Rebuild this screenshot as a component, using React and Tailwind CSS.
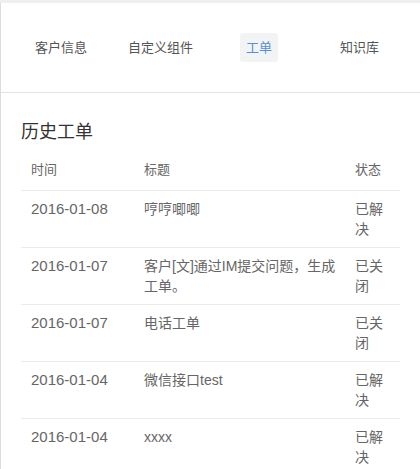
const tabs = [
  { label: '客户信息', ml: 'ml-[28px]' },
  { label: '自定义组件', ml: 'ml-[29px]' },
  { label: '工单', ml: 'ml-[41px]', active: true },
  { label: '知识库', ml: 'ml-[56px]' },
]

const orders = [
  { date: '2016-01-08', title: '哼哼唧唧', status: '已解决' },
  { date: '2016-01-07', title: '客户[文]通过IM提交问题，生成工单。', status: '已关闭' },
  { date: '2016-01-07', title: '电话工单', status: '已关闭' },
  { date: '2016-01-04', title: '微信接口test', status: '已解决' },
  { date: '2016-01-04', title: 'xxxx', status: '已解决' },
]

export default function App() {
  return (
    <div
      className="min-h-screen w-full bg-[#efefef] pt-[3px]"
      style={{ fontFamily: '"Liberation Sans", "Noto Sans CJK SC", sans-serif' }}
    >
      <div className="min-h-[466px] bg-white border-l border-[#dcdcdc] overflow-hidden">
        {/* Tabs */}
        <nav className="h-[90px] flex items-center border-b border-[#e3e3e3]">
          {tabs.map(tab => (
            <span
              key={tab.label}
              className={
                tab.ml +
                ' px-[6px] py-[6px] rounded-[3px] text-[13px] leading-[17px] whitespace-nowrap ' +
                (tab.active ? 'bg-[#f2f3f5] text-[#5a8fd0]' : 'text-[#555]')
              }
            >
              {tab.label}
            </span>
          ))}
        </nav>

        {/* History */}
        <section className="ml-[20px]">
          <h2 className="mt-[26px] text-[18px] leading-[26px] text-[#333]">历史工单</h2>
          <table className="w-[379px] table-fixed border-collapse">
            <colgroup>
              <col className="w-[113px]" />
              <col className="w-[211px]" />
              <col className="w-[55px]" />
            </colgroup>
            <thead>
              <tr className="border-b border-[#ebebeb]">
                <th className="pl-[10px] pt-[15px] pb-[10px] text-left font-normal text-[13px] leading-[20px] text-[#666]">时间</th>
                <th className="pl-[10px] pt-[15px] pb-[10px] text-left font-normal text-[13px] leading-[20px] text-[#666]">标题</th>
                <th className="px-[10px] pt-[15px] pb-[10px] text-left font-normal text-[13px] leading-[20px] text-[#666]">状态</th>
              </tr>
            </thead>
            <tbody>
              {orders.map((o, i) => (
                <tr key={i} className="border-b border-[#ebebeb]">
                  <td className="pl-[10px] py-[8px] align-top text-[15px] leading-[20px] text-[#666] whitespace-nowrap">{o.date}</td>
                  <td className="pl-[10px] pr-[2px] py-[8px] align-top text-[14px] leading-[20px] text-[#666]">{o.title}</td>
                  <td className="px-[10px] py-[8px] align-top text-[14px] leading-[20px] text-[#666] break-all">{o.status}</td>
                </tr>
              ))}
            </tbody>
          </table>
        </section>
      </div>
    </div>
  )
}
